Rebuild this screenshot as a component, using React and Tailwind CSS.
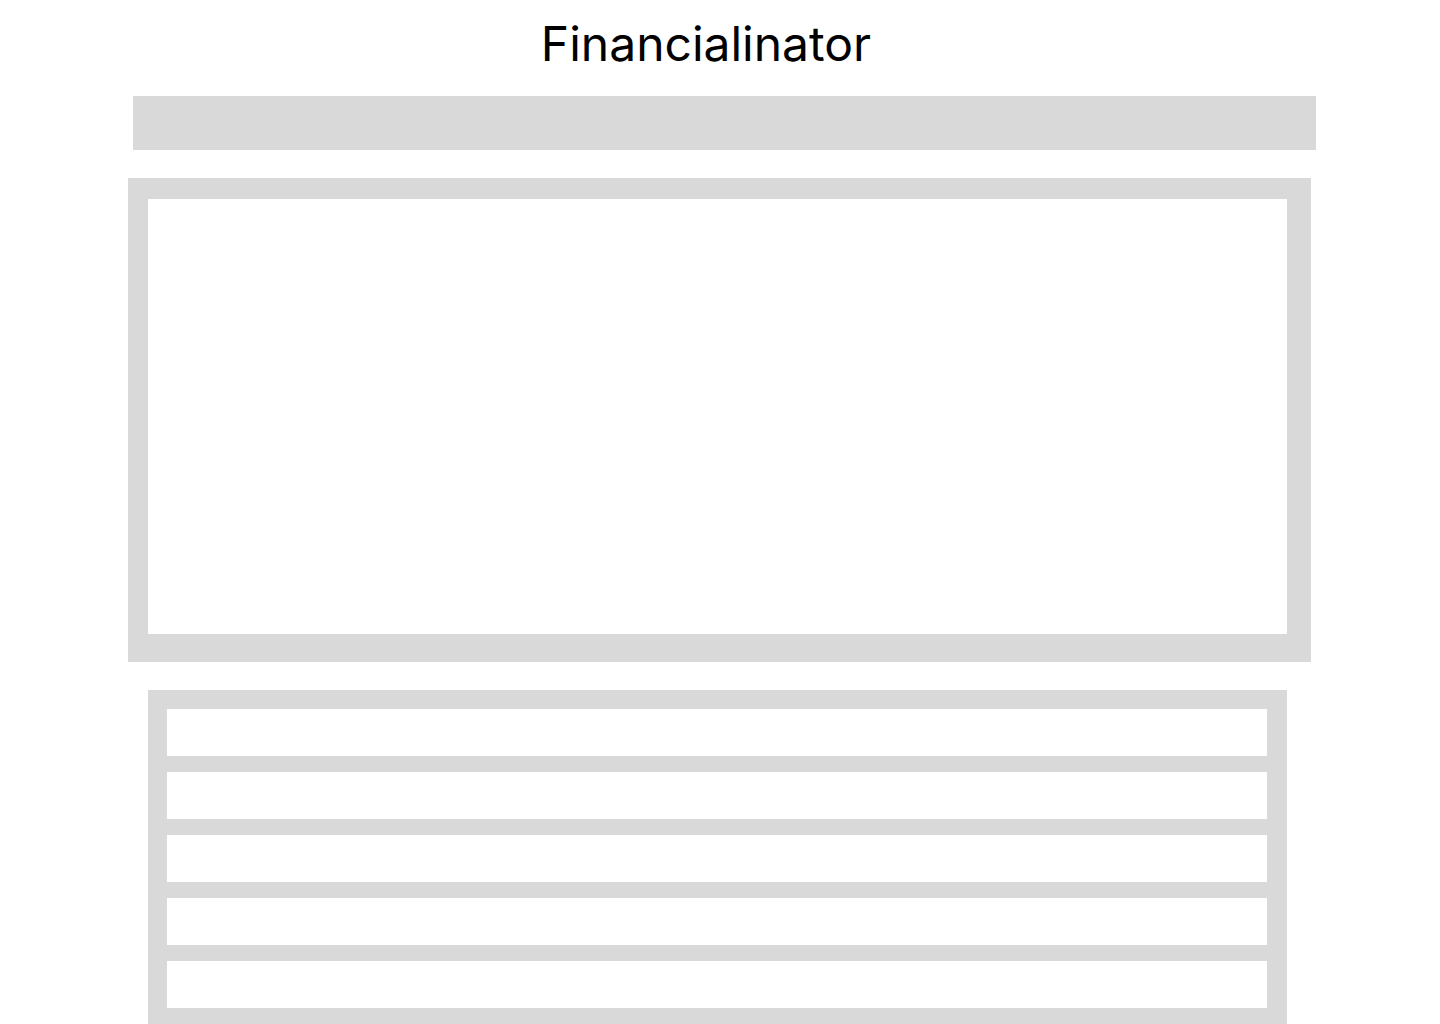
export default function App() {
  return (
    <div className="w-[1440px] h-[1024px] bg-white overflow-hidden flex flex-col" style={{ fontFamily: "Inter, 'Noto Sans', sans-serif" }}>
      <h1 className="mt-[20px] h-[48px] text-[48px] leading-[48px] text-black font-normal text-center pr-[28px]">Financialinator</h1>
      <div className="mt-[28px] ml-[133px] w-[1183px] h-[54px] bg-[#d9d9d9]"></div>
      <div className="mt-[28px] ml-[128px] w-[1183px] h-[484px] bg-[#d9d9d9] pl-[20px] pt-[21px]">
        <div className="w-[1139px] h-[435px] bg-white"></div>
      </div>
      <div className="mt-[28px] ml-[148px] w-[1139px] h-[334px] bg-[#d9d9d9] pl-[19px] pt-[19px] flex flex-col gap-[16px]">
        {[0, 1, 2, 3, 4].map((i) => (
          <div key={i} className="w-[1100px] h-[47px] bg-white shrink-0"></div>
        ))}
      </div>
    </div>
  );
}
